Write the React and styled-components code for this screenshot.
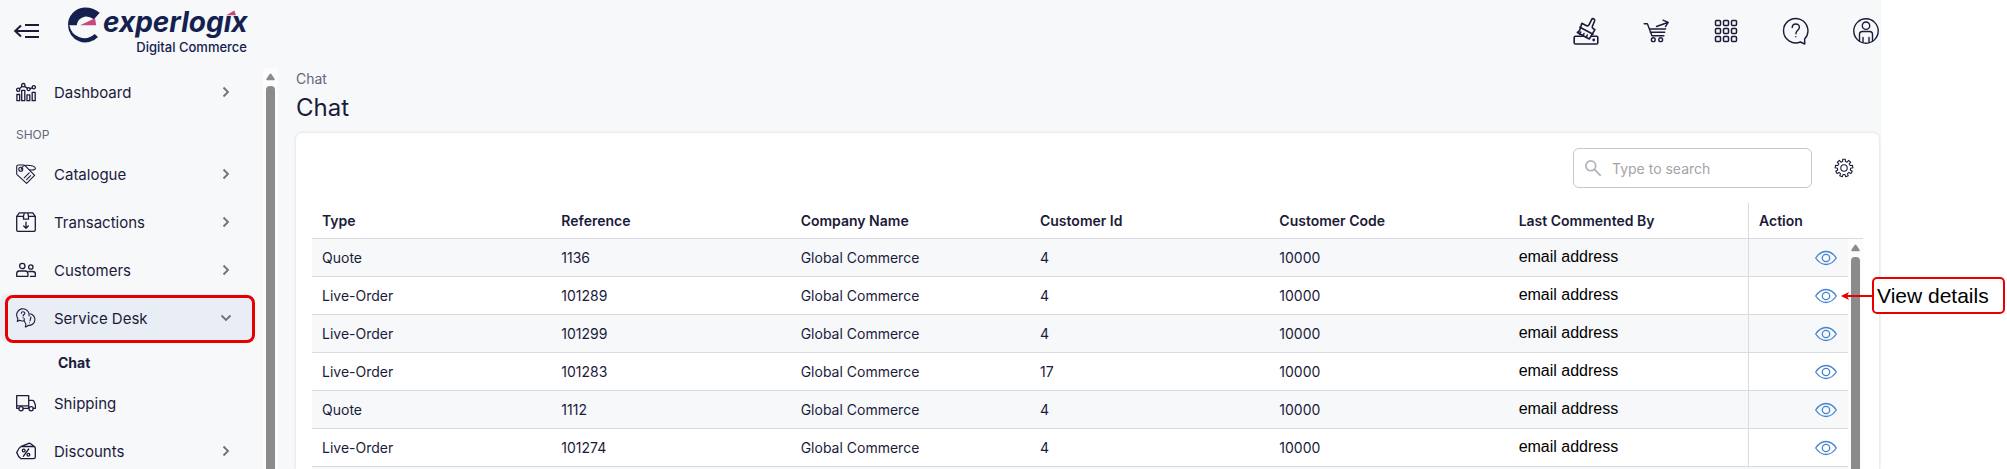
import styled, { createGlobalStyle, css } from "styled-components";

const ink = "#1b1b3a";
const navy = "#14214f";
const surface = "#f6f8fa";
const line = "#d9dbde";
const red = "#e80000";

const GlobalStyle = createGlobalStyle`
  *, *::before, *::after {
    box-sizing: border-box;
  }

  body {
    margin: 0;
    background: #fff;
    color: ${ink};
    font-family: Inter, "Liberation Sans", sans-serif;
    font-size: 14px;
  }
`;

const Shell = styled.div`
  display: flex;
  flex-direction: column;
  height: 100vh;
  overflow: hidden;
  padding-right: 126px; // Room for the callout beside the card
  background: linear-gradient(${surface}, ${surface}) no-repeat left top /
    calc(100% - 126px) 100%;
`;

const Header = styled.header`
  display: flex;
  align-items: center;
  flex: none;
  height: 62px;
  padding: 0 1px 0 13px;
`;

const IconButton = styled.button`
  display: flex;
  align-items: center;
  justify-content: center;
  padding: 0;
  border: none;
  background: none;
  color: ${({ $color }) => $color || ink};
  cursor: pointer;
`;

const LogoLink = styled.a`
  display: block;
  height: 50px;
  margin-left: 27px;
`;

const Tools = styled.div`
  display: flex;
  gap: 42px;
  margin-left: auto;
`;

const Body = styled.div`
  display: flex;
  flex: 1;
  min-height: 0;
`;

const Sidebar = styled.aside`
  display: flex;
  flex: none;
  width: 278px;
  padding-top: 6px;
`;

const Nav = styled.nav`
  flex: 1;
  overflow: hidden;
`;

const NavLink = styled.a`
  position: relative;
  display: flex;
  align-items: center;
  gap: 18px;
  height: 48px;
  margin-right: 8px;
  padding: 0 23px 0 16px;
  border-radius: 8px;
  color: ${ink};
  font-size: 15px;
  text-decoration: none;
  ${({ $active }) =>
    $active &&
    css`
      background: #e9eef6;
    `}
`;

const NavText = styled.span`
  flex: 1;
`;

const NavHeading = styled.div`
  padding: 10px 16px 6px;
  color: #65657b;
  font-size: 12px;
  line-height: 18px;
`;

const SubLink = styled.a`
  display: block;
  padding: 11px 0 6px 58px;
  color: ${ink};
  font-size: 14px;
  font-weight: 700;
  line-height: 20px;
  text-decoration: none;
`;

const Marker = styled.span`
  position: absolute;
  inset: 1px 0 -1px 5px;
  border: 3px solid ${red};
  border-radius: 8px;
`;

const Rail = styled.div`
  display: flex;
  flex-direction: column;
  align-items: center;
  flex: none;
  width: 15px;
  background: #fcfcfc;
`;

const RailHead = styled.div`
  align-self: stretch;
  flex: none;
  height: 36px;
  border-bottom: 1px solid ${line};
  background: #fff;
`;

const RailArrow = styled.svg`
  flex: none;
  margin: 5px 0;
`;

const RailThumb = styled.div`
  flex: 1;
  width: 9px;
  border-radius: 4px 4px 0 0;
  background: #8b8b8b;
`;

const Main = styled.main`
  display: flex;
  flex-direction: column;
  flex: 1;
  min-width: 0;
  padding: 7px 2px 0 18px;
`;

const Breadcrumb = styled.div`
  color: #65657b;
  line-height: 20px;
`;

const Title = styled.h1`
  margin: 4px 0 10px;
  font-size: 24px;
  font-weight: 400;
  line-height: 30px;
`;

const Card = styled.section`
  display: flex;
  flex-direction: column;
  flex: 1;
  min-height: 0;
  padding: 15px 16px 0;
  border-radius: 6px 6px 0 0;
  background: #fff;
  box-shadow: 0 0 3px rgba(20, 30, 60, 0.16);
`;

const CardTools = styled.div`
  display: flex;
  align-items: center;
  justify-content: flex-end;
  gap: 20px;
  padding: 0 7px 15px 0;
`;

const SearchBox = styled.label`
  display: flex;
  align-items: center;
  gap: 10px;
  width: 239px;
  height: 40px;
  padding: 0 10px;
  border: 1px solid #c6c7cb;
  border-radius: 6px;
  color: #b4b5bb;
`;

const SearchInput = styled.input`
  flex: 1;
  min-width: 0;
  padding: 0;
  border: none;
  outline: none;
  background: none;
  color: ${ink};
  font: inherit;

  &::placeholder {
    color: #a3a4a8;
    opacity: 1;
  }
`;

const TableArea = styled.div`
  display: flex;
  flex: 1;
  align-items: stretch;
  min-height: 0;
  background: ${surface};
`;

const TableBox = styled.div`
  flex: 1;
  min-width: 0;
`;

const Table = styled.table`
  width: 100%;
  table-layout: fixed;
  border-collapse: separate;
  border-spacing: 0;
`;

const ActionCol = styled.col`
  width: 100px;
`;

const HeadCell = styled.th`
  height: 36px;
  padding: 0 10px;
  border-bottom: 1px solid ${line};
  border-left: ${({ $divided }) => ($divided ? `1px solid ${line}` : "none")};
  background: #fff;
  font-weight: 600;
  text-align: left;
`;

const Row = styled.tr`
  background: ${surface};

  &:nth-child(even) {
    background: #fff;
  }
`;

const Cell = styled.td`
  height: 38px;
  padding: 0 11px 0 10px;
  border-bottom: 1px solid ${line};
`;

const EmailCell = styled(Cell)`
  padding-bottom: 2px;
  color: #000;
  font-family: "Liberation Sans", Arial, sans-serif;
  font-size: 16px;
`;

const ActionCell = styled(Cell)`
  position: relative;
  border-left: 1px solid ${line};
`;

const ViewButton = styled(IconButton)`
  margin-left: auto;
`;

const Callout = styled.div`
  position: absolute;
  top: 0;
  left: 92px;
  z-index: 1;
  display: flex;
  align-items: center;
`;

const CalloutLabel = styled.span`
  width: 133px;
  padding: 0 3px;
  border: 2px solid ${red};
  border-radius: 5px;
  background: #fff;
  color: #000;
  font-family: "Liberation Sans", Arial, sans-serif;
  font-size: 21px;
  line-height: 33px;
  white-space: nowrap;
`;

function Icon({ size = 20, weight = 1.1, children }) {
  return (
    <svg
      width={size}
      height={size}
      viewBox={`0 0 ${size} ${size}`}
      fill="none"
      stroke="currentColor"
      strokeWidth={weight}
      strokeLinecap="round"
      strokeLinejoin="round"
      aria-hidden="true"
    >
      {children}
    </svg>
  );
}

const DashboardIcon = () => (
  <Icon weight={1.3}>
    <path d="M.9 12.5h2.8v6.2H.9zM5.7 8.3h3.1v10.4H5.7zM11 12.8h2.8v5.9H11zM16.2 10.3h3v8.4h-3z" />
    <circle cx="2.2" cy="7.8" r="1.6" />
    <circle cx="7.3" cy="3.2" r="1.7" />
    <circle cx="12.6" cy="7.2" r="1.5" />
    <circle cx="17.8" cy="5.2" r="1.6" />
    <path d="M3.4 6.7 6 4.4M8.5 4.4l3 2M14 6.6l2.4-.8" />
  </Icon>
);

const CatalogueIcon = () => (
  <Icon>
    <path d="M.7 2.6Q.7 1 2.3 1h5.4q.8 0 1.4.6l9.5 9.8-8 8L1.3 10.8q-.6-.6-.6-1.3z" />
    <circle cx="4.8" cy="5.2" r="2" />
    <path d="M5.2 5.4C5.5 3 8 1.2 11 1.2c4 0 8.3 1.3 8.4 3.2.1 1.700-3.300 1.700-5.700 1.500M8.200 13.800l5-5M10.600 15.600l4-4" />
  </Icon>
);

const TransactionsIcon = () => (
  <Icon weight={1.3}>
    <path d="M.7 4.300 3.300.8h13.400l2.600 3.500v13.700q0 1.400-1.400 1.400H2.100Q.7 19.400.7 18zM.7 4.300h6.600M12.700 4.300h6.600M8.300.8l-.8 3.500v2.900h5V4.300L11.700.8M10 10.200v6M7.700 14l2.300 2.300 2.300-2.300" />
  </Icon>
);

const CustomersIcon = () => (
  <Icon weight={1.3}>
    <circle cx="6.300" cy="6" r="2.700" />
    <circle cx="14.800" cy="7" r="2.200" />
    <path d="M.7 16.300v-2.600q0-2.700 2.700-2.700h5.800q2.700 0 2.700 2.700v2.600zM12.800 11.500h3.800q2.800 0 2.800 2.500v2.300h-5" />
  </Icon>
);

const ServiceDeskIcon = () => (
  <Icon>
    <path d="M3.500 12.300 1.300 13.400l.6-2.800A6.200 6.200 0 1 1 13 8M3.500 12.300a6.200 6.200 0 0 0 4.400.4" />
    <path d="M14 5.800a5.800 5.800 0 1 1-1.800 11.500q-1 1.300-3 1.700.8-1.200.6-3.100-2.400-2.500-1.600-5.400" />
    <path d="M5.300 5.200c.1-2 3.600-2 3.500 0 0 1.300-1.600 1.300-1.700 2.700M7.100 9.600v.1M14.900 9l-.9 3.800M13.500 14.700v.1" />
  </Icon>
);

const ShippingIcon = () => (
  <Icon weight={1.3}>
    <path d="M2.700 15.300H.7V2.700h12v12.600H7.300M12.700 7.300h3.700q1 0 1.500 1l1.500 3.600v3.400h-2M.7 12.800h12" />
    <circle cx="5" cy="15.700" r="2.100" />
    <circle cx="15.100" cy="15.700" r="2.100" />
  </Icon>
);

const DiscountsIcon = () => (
  <Icon weight={1.3}>
    <path d="M.7 11.500Q2.200 7.200 5 5.500h12.500q1.800 0 1.800 1.800V16q0 1.700-1.800 1.700H5Q2.200 15.900.7 11.500zM5.300 5.400l7.500-3q1-.4 1.900.4l3.500 2.800M12.700 8l-5.400 7.300" />
    <circle cx="7.700" cy="9.500" r="1.400" />
    <circle cx="12.400" cy="13.800" r="1.400" />
  </Icon>
);

const BrushIcon = () => (
  <Icon size={28} weight={1.6}>
    <rect x="2.200" y="19.300" width="23.600" height="7.700" rx="1.300" />
    <circle cx="21.700" cy="23" r=".6" fill="currentColor" />
    <path
      fill={surface}
      d="m9.800 6.300 4.800 2.400q1.700.6 2.500-1l2.500-5q.7-1.400 2-.9 1.500.7 1 2.200l-2.200 5.200q-.7 1.500.7 2.300l1.800 1.200-5.600 9.300-12-6.500q1.800-1 2.500-2.600z"
    />
    <path d="m8 10.200 13 7M8.700 15l-1.200 2M12 16.500l-1.200 2.500M15.300 18l-1.200 2.500" />
  </Icon>
);

const CartIcon = () => (
  <Icon size={28} weight={1.4}>
    <path d="M2.200 6.700h3.200l4.500 12h12M7.300 12h16.300M8.300 15.300h14.400M14.500 9.500l11.300-4M21 3.200l5.200 2.200-2.700 4.200" />
    <circle cx="11.300" cy="22.700" r="1.900" />
    <circle cx="18.700" cy="22.700" r="1.900" />
  </Icon>
);

const GridIcon = () => (
  <Icon size={28} weight={1.5}>
    {[6, 14, 22].map((y) =>
      [6, 14, 22].map((x) => (
        <rect key={`${x}-${y}`} x={x - 2.5} y={y - 2.5} width="5" height="5" rx="1" />
      ))
    )}
  </Icon>
);

const HelpIcon = () => (
  <Icon size={28} weight={1.4}>
    <path d="M22.600 22.100A12.200 12.200 0 1 0 18.400 25l4.400 2z" />
    <path d="M10.200 10.600c0-4.700 7.200-4.700 7.200-.4 0 3-3.500 3.200-3.500 6.500M13.800 19.600v.1" />
  </Icon>
);

const UserIcon = () => (
  <Icon size={28} weight={1.4}>
    <circle cx="14" cy="14" r="12.200" />
    <circle cx="14" cy="8.700" r="3.700" />
    <path d="M7.500 23.800v-6.500q0-2.800 2.800-2.800h7.400q2.800 0 2.800 2.800v6.500M11 20.500v5M17 20.500v5" />
  </Icon>
);

const SearchIcon = () => (
  <Icon size={18} weight={1.8}>
    <circle cx="6.800" cy="6.800" r="4.900" />
    <path d="m10.500 10.500 5.800 5.800" />
  </Icon>
);

const GearIcon = () => {
  // Alternate between root and tip radius around the wheel
  const teeth = 9;
  const points = [];
  for (let i = 0; i < teeth; i++) {
    [[-0.3, 6.6], [-0.21, 8.9], [0.21, 8.9], [0.3, 6.6]].forEach(([shift, r]) => {
      const angle = ((i + shift) / teeth) * Math.PI * 2 - Math.PI / 2;
      points.push(
        `${(12 + r * Math.cos(angle)).toFixed(2)},${(12 + r * Math.sin(angle)).toFixed(2)}`
      );
    });
  }
  return (
    <Icon size={24}>
      <polygon points={points.join(" ")} />
      <circle cx="12" cy="12" r="3.200" />
    </Icon>
  );
};

const EyeIcon = () => (
  <svg width="22" height="16" viewBox="0 0 22 16" fill="none" stroke="currentColor" strokeWidth="1.3" aria-hidden="true">
    <path d="M.7 8Q5 1.500 11 1.500T21.300 8Q17 14.500 11 14.500T.7 8z" />
    <circle cx="11" cy="8" r="3.700" />
  </svg>
);

const Chevron = ({ open }) => (
  <svg width="12" height="12" viewBox="0 0 12 12" fill="none" stroke="#707078" strokeWidth="1.8" aria-hidden="true">
    <path d={open ? "M1.500 3.500 6 8l4.500-4.500" : "M3.500 1.500 8 6l-4.500 4.500"} />
  </svg>
);

const CollapseIcon = () => (
  <svg width="27" height="16" viewBox="0 0 27 16" fill="none" stroke="currentColor" strokeWidth="2" aria-hidden="true">
    <path d="M12 2h14M2 8h24M12 14h14M8 2.500 2.200 8 8 13.500" />
  </svg>
);

const Logo = () => (
  <svg width="182" height="50" viewBox="0 0 182 50" fill={navy} role="img" aria-label="experlogix Digital Commerce">
    <path d="M1 19.300A17.500 17.500 0 0 1 17.500 1.500Q26 1.300 32.700 6.700L27 13.300Q22 10 17.500 10.700 10.500 12.300 9.700 19.300z" />
    <path d="M1 19.300A17.300 17.300 0 0 0 31 30.900L27.700 28A15.200 15.200 0 0 1 2.400 19.300z" />
    <path fill="#c8487e" d="M13 19.300 28 12.300l1.200 7zM159.300 9.300l8-4.700 1.700 4.700z" />
    <text x="36" y="25.700" fontSize="28" fontWeight="700" fontStyle="italic">
      experlogıx
    </text>
    <text x="180" y="46.300" fontSize="13" fontWeight="500" textAnchor="end">
      Digital Commerce
    </text>
  </svg>
);

function ScrollRail({ headed }) {
  return (
    <Rail>
      {headed && <RailHead />}
      <RailArrow width="9" height="8" viewBox="0 0 9 8" fill="#8b8b8b">
        <path d="M4.500.5q.5 0 1 .7L8.700 6q.3 1-.7 1.300H1Q0 7 .3 6l3.200-4.800q.5-.7 1-.7z" />
      </RailArrow>
      <RailThumb />
    </Rail>
  );
}

function NavItem({ icon: ItemIcon, label, expandable = true, active }) {
  return (
    <NavLink href="#" $active={active}>
      <ItemIcon />
      <NavText>{label}</NavText>
      {expandable && <Chevron open={active} />}
      {active && <Marker />}
    </NavLink>
  );
}

const tools = [
  { label: "Clear cache", icon: BrushIcon },
  { label: "Cart", icon: CartIcon },
  { label: "Apps", icon: GridIcon },
  { label: "Help", icon: HelpIcon },
  { label: "Account", icon: UserIcon },
];

const columns = [
  "Type",
  "Reference",
  "Company Name",
  "Customer Id",
  "Customer Code",
  "Last Commented By",
];

const chats = [
  { type: "Quote", reference: "1136", customerId: "4" },
  { type: "Live-Order", reference: "101289", customerId: "4", callout: true },
  { type: "Live-Order", reference: "101299", customerId: "4" },
  { type: "Live-Order", reference: "101283", customerId: "17" },
  { type: "Quote", reference: "1112", customerId: "4" },
  { type: "Live-Order", reference: "101274", customerId: "4" },
];

function ChatRow({ chat }) {
  return (
    <Row>
      <Cell>{chat.type}</Cell>
      <Cell>{chat.reference}</Cell>
      <Cell>Global Commerce</Cell>
      <Cell>{chat.customerId}</Cell>
      <Cell>10000</Cell>
      <EmailCell>email address</EmailCell>
      <ActionCell>
        <ViewButton type="button" $color="#4583cf" aria-label="View chat">
          <EyeIcon />
        </ViewButton>
        {chat.callout && (
          <Callout>
            <svg width="31" height="10" viewBox="0 0 31 10" aria-hidden="true">
              <path d="M5 5h26" stroke={red} strokeWidth="2" />
              <path d="M0 5 8 1 6 5l2 4z" fill={red} />
            </svg>
            <CalloutLabel>View details</CalloutLabel>
          </Callout>
        )}
      </ActionCell>
    </Row>
  );
}

export default function App() {
  return (
    <>
      <GlobalStyle />
      <Shell>
        <Header>
          <IconButton type="button" aria-label="Collapse menu">
            <CollapseIcon />
          </IconButton>
          <LogoLink href="#">
            <Logo />
          </LogoLink>
          <Tools>
            {tools.map(({ label, icon: ToolIcon }) => (
              <IconButton key={label} type="button" aria-label={label}>
                <ToolIcon />
              </IconButton>
            ))}
          </Tools>
        </Header>
        <Body>
          <Sidebar>
            <Nav>
              <NavItem icon={DashboardIcon} label="Dashboard" />
              <NavHeading>SHOP</NavHeading>
              <NavItem icon={CatalogueIcon} label="Catalogue" />
              <NavItem icon={TransactionsIcon} label="Transactions" />
              <NavItem icon={CustomersIcon} label="Customers" />
              <NavItem icon={ServiceDeskIcon} label="Service Desk" active />
              <SubLink href="#">Chat</SubLink>
              <NavItem icon={ShippingIcon} label="Shipping" expandable={false} />
              <NavItem icon={DiscountsIcon} label="Discounts" />
            </Nav>
            <ScrollRail />
          </Sidebar>
          <Main>
            <Breadcrumb>Chat</Breadcrumb>
            <Title>Chat</Title>
            <Card>
              <CardTools>
                <SearchBox>
                  <SearchIcon />
                  <SearchInput type="text" placeholder="Type to search" aria-label="Search" />
                </SearchBox>
                <IconButton type="button" aria-label="Settings">
                  <GearIcon />
                </IconButton>
              </CardTools>
              <TableArea>
                <TableBox>
                  <Table>
                    <colgroup>
                      {columns.map((name) => (
                        <col key={name} />
                      ))}
                      <ActionCol />
                    </colgroup>
                    <thead>
                      <tr>
                        {columns.map((name) => (
                          <HeadCell key={name}>{name}</HeadCell>
                        ))}
                        <HeadCell $divided>Action</HeadCell>
                      </tr>
                    </thead>
                    <tbody>
                      {chats.map((chat) => (
                        <ChatRow key={chat.reference} chat={chat} />
                      ))}
                    </tbody>
                  </Table>
                </TableBox>
                <ScrollRail headed />
              </TableArea>
            </Card>
          </Main>
        </Body>
      </Shell>
    </>
  );
}
